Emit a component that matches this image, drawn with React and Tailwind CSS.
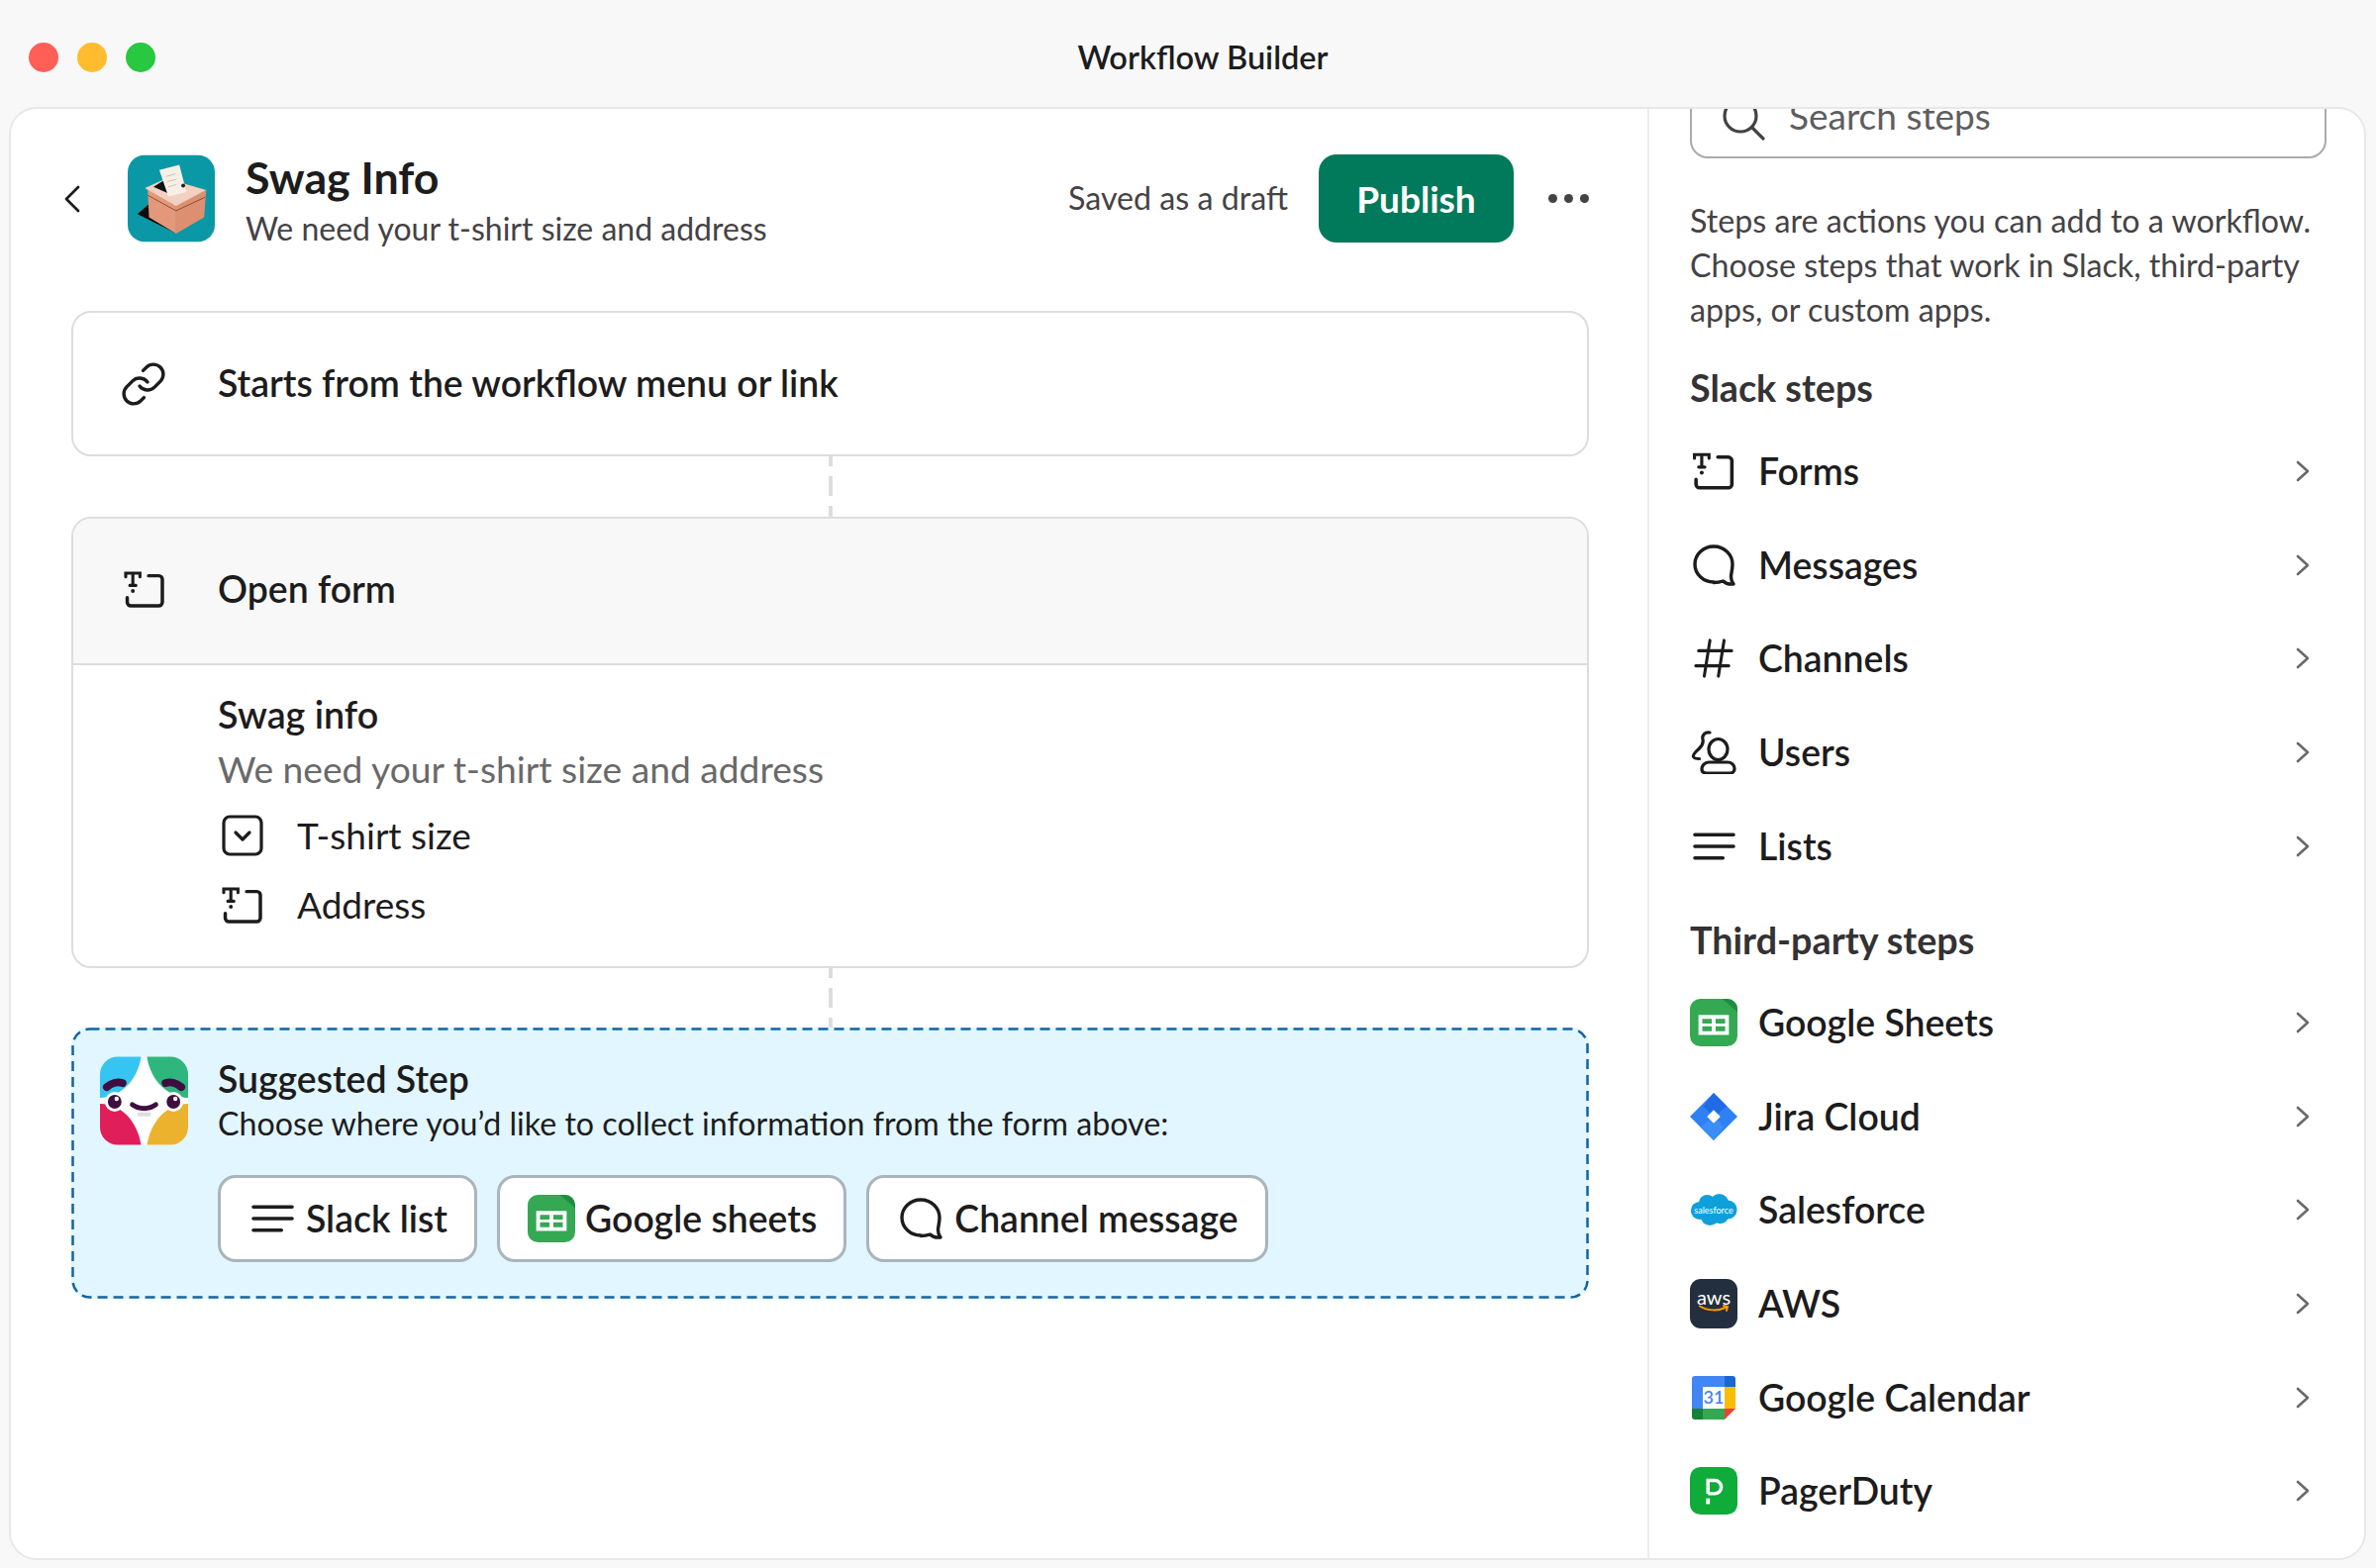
const FormIcon = ({ className }) => (
  <svg viewBox="0 0 40 36" fill="none" stroke="#1d1c1d" strokeWidth="3.400" strokeLinecap="round" className={className}>
    <path d="M24 4.500h10a3.500 3.500 0 0 1 3.500 3.500v22.500a3.500 3.500 0 0 1-3.500 3.500H6.500a3.500 3.500 0 0 1-3.500-3.500V26" />
    <path d="M1.500 5.500V2h14v3.500M8.500 2v11.500M5.500 14h6" strokeWidth="3" />
    <circle cx="8.500" cy="19.500" r="1.900" fill="#1d1c1d" stroke="none" />
  </svg>
);

const ListIcon = ({ className }) => (
  <svg viewBox="0 0 44 30" fill="none" stroke="#1d1c1d" strokeWidth="3.600" strokeLinecap="round" className={className}>
    <path d="M2 3h40M2 15h40M2 27h29" />
  </svg>
);

const BubbleIcon = ({ className }) => (
  <svg viewBox="0 0 44 44" fill="none" stroke="#1d1c1d" strokeWidth="3.400" strokeLinejoin="round" className={className}>
    <path d="M22 39C11.500 39 3 31 3 21S11.500 3 22 3s19 8 19 18c0 5.500-1.500 9.500-1.500 12.500 0 3 1 5.500 2.500 7.500-4 .5-8-.5-10.500-3-2.800 1-6 1.500-9.500 1.500z" />
  </svg>
);

const HashIcon = ({ className }) => (
  <svg viewBox="0 0 42 42" fill="none" stroke="#1d1c1d" strokeWidth="3.200" strokeLinecap="round" className={className}>
    <path d="M5 13h35M2 29h35M17 2 11 40M32 2l-6 38" />
  </svg>
);

const UsersIcon = ({ className }) => (
  <svg viewBox="0 0 46 44" fill="none" stroke="#1d1c1d" strokeWidth="3.200" strokeLinecap="round" strokeLinejoin="round" className={className}>
    <ellipse cx="27.500" cy="19" rx="9.500" ry="10.500" />
    <path d="M18 32h19c4 0 7 3 7 6v1c0 2.500-2 4-4 4H16c-3 0-5-1.500-5-4 0-3.500 3-7 7-7z" />
    <path d="M19 2c-5-.5-8 2.500-7 7 .8 3.500-.5 6-3.500 9-3 3-7 6-6 8.500 .7 1.800 3 2 6 2" />
  </svg>
);

const DropdownIcon = ({ className }) => (
  <svg viewBox="0 0 42 42" fill="none" stroke="#1d1c1d" strokeWidth="3.200" strokeLinecap="round" strokeLinejoin="round" className={className}>
    <rect x="2" y="2" width="38" height="38" rx="6" />
    <path d="m14 18 7 7 7-7" />
  </svg>
);

const LinkIcon = ({ className }) => (
  <svg viewBox="0 0 24 24" fill="none" stroke="#1d1c1d" strokeWidth="1.700" strokeLinecap="round" strokeLinejoin="round" className={className}>
    <path d="M10 13a5 5 0 0 0 7.540.54l3-3a5 5 0 0 0-7.070-7.070l-1.720 1.710" />
    <path d="M14 11a5 5 0 0 0-7.540-.54l-3 3a5 5 0 0 0 7.070 7.070l1.710-1.710" />
  </svg>
);

const BallotLogo = ({ className }) => (
  <svg viewBox="0 0 270 268" className={className}>
    <rect width="270" height="268" rx="52" fill="#0b98a6" />
    <path d="M30 182 70 148 150 242z" fill="#0c0c0c" />
    <path d="M62 104 150 155v88L66 192z" fill="#e3987a" />
    <path d="M150 155 243 108l-6 84-87 51z" fill="#dd8f6f" />
    <path d="M53 102 120 72 243 108 150 157z" fill="#f3d0bf" />
    <path d="M62 124 150 172 240 130" fill="none" stroke="#8b4a35" strokeWidth="3" />
    <path d="M80 98 112 78l18 42z" fill="#111" />
    <path d="M98 46 160 30l22 84-56 14z" fill="#f6f0e6" />
    <path d="M118 66l30-8M122 82l30-8M126 98l24-7" stroke="#c9c2b4" strokeWidth="3" />
    <circle cx="172" cy="94" r="6" fill="#222" />
  </svg>
);

const MascotLogo = ({ className }) => (
  <svg viewBox="0 0 90 90" className={className}>
    <rect width="90" height="90" rx="20" fill="#fff" />
    <path d="M42 0H18A18 18 0 0 0 0 18v24c20-1 38-16 42-42z" fill="#36c5f0" />
    <path d="M48 0h24a18 18 0 0 1 18 18v24C70 41 52 26 48 0z" fill="#2eb67d" />
    <path d="M0 48c22 0 38 18 42 42H18A18 18 0 0 1 0 72z" fill="#e01e5a" />
    <path d="M90 48c-22 0-38 18-42 42h24a18 18 0 0 0 18-18z" fill="#ecb22e" />
    <path d="M7 31c4-4 11-6 16-4M83 31c-4-4-11-6-16-4" fill="none" stroke="#3f0e40" strokeWidth="8" strokeLinecap="round" />
    <circle cx="15" cy="46" r="10" fill="#fff" />
    <circle cx="75" cy="46" r="10" fill="#fff" />
    <circle cx="15" cy="46" r="7" fill="#3f0e40" />
    <circle cx="75" cy="46" r="7" fill="#3f0e40" />
    <circle cx="17" cy="43" r="2.200" fill="#fff" />
    <circle cx="77" cy="43" r="2.200" fill="#fff" />
    <path d="M33 49c6 5 18 5 24 0" fill="none" stroke="#3f0e40" strokeWidth="5" strokeLinecap="round" />
    <path d="M40 59h10" stroke="#ddd" strokeWidth="4" strokeLinecap="round" />
  </svg>
);

const SheetsLogo = ({ className }) => (
  <svg viewBox="0 0 50 50" className={className}>
    <rect width="50" height="50" rx="11" fill="#34a853" />
    <path d="M34 0h5a11 11 0 0 1 11 11v3z" fill="#1e8e3e" />
    <path d="M9 17h32v21H9z" fill="#fff" />
    <path d="M13 21h10v5h-10zM27 21h10v5h-10zM13 29h10v5h-10zM27 29h10v5h-10z" fill="#34a853" />
  </svg>
);

const JiraLogo = ({ className }) => (
  <svg viewBox="0 0 50 50" className={className}>
    <path d="M25 0 50 25 25 50 0 25z" fill="#2f80f5" />
    <path d="M25 0 39 14 25 25 14 14z" fill="#1a62dd" opacity=".7" />
    <path d="M25 50 36 36 25 25 11 36z" fill="#3b8df7" />
    <path d="M25 18 32 25 25 32 18 25z" fill="#fff" />
  </svg>
);

const SalesforceLogo = ({ className }) => (
  <div className={`relative ${className}`}>
    <svg viewBox="0 0 50 36" className="w-full h-full">
      <g fill="#0ea0db">
        <circle cx="18" cy="11" r="9" />
        <circle cx="31" cy="11" r="10" />
        <circle cx="40" cy="18" r="10" />
        <circle cx="10" cy="19" r="9.500" />
        <circle cx="21" cy="25" r="10" />
        <circle cx="32" cy="24" r="9" />
      </g>
    </svg>
    <span className="absolute inset-0 flex items-center justify-center text-[9px] text-white leading-none">salesforce</span>
  </div>
);

const AwsLogo = ({ className }) => (
  <div className={`bg-[#232f3e] rounded-[11px] flex flex-col items-center justify-center ${className}`}>
    <span className="text-[20px] leading-[16px] text-white -mt-[5px]">aws</span>
    <svg viewBox="0 0 32 9" className="w-[32px] h-[9px]">
      <path d="M2 1.500c8 5 19 5 27 1M26 1l4 1-1 4" fill="none" stroke="#f90" strokeWidth="2" strokeLinecap="round" />
    </svg>
  </div>
);

const CalendarLogo = ({ className }) => (
  <div className={`relative ${className}`}>
    <svg viewBox="0 0 44 44" className="w-full h-full">
      <path d="M3 0h33v11H11v22H0V3a3 3 0 0 1 3-3z" fill="#4285f4" />
      <path d="M33 0h8a3 3 0 0 1 3 3v8H33z" fill="#1967d2" />
      <path d="M33 11h11v22H33z" fill="#fbbc04" />
      <path d="M11 33h22v11H11z" fill="#34a853" />
      <path d="M0 33h11v11H3a3 3 0 0 1-3-3z" fill="#188038" />
      <path d="M33 33h11L33 44z" fill="#ea4335" />
    </svg>
    <span className="absolute inset-0 flex items-center justify-center text-[18px] leading-none text-[#4285f4] font-semibold -mt-[1px]">31</span>
  </div>
);

const PagerLogo = ({ className }) => (
  <svg viewBox="0 0 50 50" className={className}>
    <rect width="50" height="50" rx="11" fill="#0fac3a" />
    <path d="M19 28V14h7a7 7 0 0 1 0 14h-7" fill="none" stroke="#fff" strokeWidth="3.600" />
    <path d="M19 33v6" stroke="#fff" strokeWidth="4" />
  </svg>
);

const slackSteps = [
  { name: "Forms", icon: <FormIcon className="w-[42px] h-[38px]" /> },
  { name: "Messages", icon: <BubbleIcon className="w-[44px] h-[44px]" /> },
  { name: "Channels", icon: <HashIcon className="w-[40px] h-[40px]" /> },
  { name: "Users", icon: <UsersIcon className="w-[46px] h-[44px]" /> },
  { name: "Lists", icon: <ListIcon className="w-[43px] h-[30px]" /> },
];

const thirdPartySteps = [
  { name: "Google Sheets", icon: <SheetsLogo className="w-[50px] h-[50px]" /> },
  { name: "Jira Cloud", icon: <JiraLogo className="w-[48px] h-[50px]" /> },
  { name: "Salesforce", icon: <SalesforceLogo className="w-[48px] h-[34px]" /> },
  { name: "AWS", icon: <AwsLogo className="w-[50px] h-[50px]" /> },
  { name: "Google Calendar", icon: <CalendarLogo className="w-[44px] h-[44px]" /> },
  { name: "PagerDuty", icon: <PagerLogo className="w-[50px] h-[50px]" /> },
];

const StepRow = ({ name, icon }) => (
  <div className="h-[94.6px] flex items-center">
    <div className="w-[48px] flex justify-center">{icon}</div>
    <span className="ml-[21px] text-[37.4px] font-semibold text-[#1d1c1d]">{name}</span>
    <svg viewBox="0 0 14 22" fill="none" stroke="#696969" strokeWidth="2.600" strokeLinecap="round" strokeLinejoin="round" className="ml-auto mr-[17px] w-[14px] h-[22px]">
      <path d="m2 2 10 9-10 9" />
    </svg>
  </div>
);

const Connector = ({ className }) => (
  <div className={`ml-[765px] w-[4px] bg-[linear-gradient(#dddddd_66%,transparent_66%)] bg-[length:100%_30px] bg-[position:0_-10px] ${className}`} />
);

const SuggestButton = ({ icon, label }) => (
  <button className="h-[88px] pl-[18px] pr-[27px] flex items-center bg-white border-[3px] border-[#a9b4bb] rounded-[18px] text-[37.4px] font-semibold text-[#1d1c1d]">
    <span className="w-[68px] flex justify-center">{icon}</span>
    {label}
  </button>
);

const App = () => {
  return (
    <div className="w-[2400px] h-[1584px] flex flex-col bg-[#f8f8f8] overflow-hidden [font-family:Lato,sans-serif]">
      {/* title bar */}
      <div className="relative h-[108px] shrink-0 flex items-center pt-[8px] pl-[29px] gap-[19px]">
        <div className="w-[30px] h-[30px] rounded-full bg-[#ff5f57]" />
        <div className="w-[30px] h-[30px] rounded-full bg-[#febc2e]" />
        <div className="w-[30px] h-[30px] rounded-full bg-[#28c840]" />
        <div className="absolute inset-x-0 pl-[30px] text-center text-[32.5px] font-semibold text-[#1d1c1d]">Workflow Builder</div>
      </div>

      <div className="ml-[9px] mr-[10px] h-[1468px] flex bg-white border-2 border-[#e8e8e8] rounded-[28px] overflow-hidden">
        {/* left column */}
        <div className="w-[1655px] shrink-0 pl-[61px] pr-[59px] pt-[46px] border-r-2 border-[#ececec]">
          <div className="h-[89px] flex items-center">
            <svg viewBox="0 0 18 28" fill="none" stroke="#1d1c1d" strokeWidth="2.800" strokeLinecap="round" strokeLinejoin="round" className="-ml-[8px] w-[18px] h-[28px]">
              <path d="M15 2 3 14l12 12" />
            </svg>
            <BallotLogo className="ml-[47px] w-[88px] h-[89px]" />
            <div className="ml-[31px] self-start">
              <div className="text-[44.7px] leading-[46px] font-bold text-[#1d1c1d]">Swag Info</div>
              <div className="mt-[8px] text-[32px] leading-[42px] text-[#454245]">We need your t-shirt size and address</div>
            </div>
            <span className="ml-auto text-[32.2px] text-[#454245]">Saved as a draft</span>
            <button className="ml-[31px] w-[197px] h-[89px] rounded-[18px] bg-[#007a5a] text-white text-[37px] font-bold">Publish</button>
            <div className="ml-[35px] flex gap-[7px]">
              <div className="w-[9px] h-[9px] rounded-full bg-[#454245]" />
              <div className="w-[9px] h-[9px] rounded-full bg-[#454245]" />
              <div className="w-[9px] h-[9px] rounded-full bg-[#454245]" />
            </div>
          </div>

          <div className="mt-[69px] h-[147px] flex items-center pl-[47px] gap-[51px] border-2 border-[#dddddd] rounded-[20px]">
            <LinkIcon className="w-[48px] h-[48px]" />
            <span className="text-[37.4px] font-semibold text-[#1d1c1d]">Starts from the workflow menu or link</span>
          </div>

          <Connector className="h-[61px]" />

          <div className="h-[456px] border-2 border-[#dddddd] rounded-[20px] overflow-hidden">
            <div className="h-[148px] flex items-center pl-[51px] pb-[3px] gap-[53px] bg-[#f8f8f8] border-b-2 border-[#dddddd]">
              <FormIcon className="w-[42px] h-[37px]" />
              <span className="text-[37.4px] font-semibold text-[#1d1c1d]">Open form</span>
            </div>
            <div className="pl-[146px] pt-[27px]">
              <div className="text-[37.7px] leading-[46px] font-semibold text-[#1d1c1d]">Swag info</div>
              <div className="mt-[9px] text-[37.2px] leading-[46px] text-[#696969]">We need your t-shirt size and address</div>
              <div className="mt-[22px] h-[44px] flex items-center gap-[34px] pl-[4px] text-[37px] text-[#1d1c1d]">
                <DropdownIcon className="w-[42px] h-[42px]" />
                T-shirt size
              </div>
              <div className="mt-[26px] h-[44px] flex items-center gap-[34px] pl-[4px] text-[37px] text-[#1d1c1d]">
                <FormIcon className="w-[42px] h-[37px]" />
                Address
              </div>
            </div>
          </div>

          <Connector className="h-[60px]" />

          <div className="relative h-[274px] pl-[29px] pt-[29px] flex gap-[30px] bg-[#e1f6ff] rounded-[18px]">
            <svg className="absolute inset-0 w-full h-full" fill="none">
              <rect x="1.500" y="1.500" width="1530" height="271" rx="17" stroke="#1264a3" strokeWidth="2.500" strokeDasharray="10 6" />
            </svg>
            <MascotLogo className="w-[89px] h-[90px] shrink-0" />
            <div>
              <div className="text-[37.4px] leading-[45px] font-semibold text-[#1d1c1d]">Suggested Step</div>
              <div className="text-[32.2px] leading-[45px] text-[#1d1c1d]">Choose where you’d like to collect information from the form above:</div>
              <div className="mt-[30px] flex gap-[20px]">
                <SuggestButton icon={<ListIcon className="w-[43px] h-[30px]" />} label="Slack list" />
                <SuggestButton icon={<SheetsLogo className="w-[48px] h-[50px]" />} label="Google sheets" />
                <SuggestButton icon={<BubbleIcon className="w-[44px] h-[44px]" />} label="Channel message" />
              </div>
            </div>
          </div>
        </div>

        {/* steps sidebar */}
        <div className="flex-1 pl-[41px] pr-[38px] overflow-hidden">
          <div className="-mt-[42px] h-[92px] flex items-end pb-[18px] pl-[30px] gap-[24px] border-2 border-[#aaaaaa] rounded-[18px]">
            <svg viewBox="0 0 44 44" fill="none" stroke="#454245" strokeWidth="3.200" strokeLinecap="round" className="w-[44px] h-[44px] shrink-0 -mb-[2px]">
              <circle cx="19" cy="19" r="16" />
              <path d="m31 31 11 11" />
            </svg>
            <span className="text-[37px] leading-[46px] text-[#5e5d60]">Search steps</span>
          </div>

          <p className="mt-[40px] text-[32.2px] leading-[45px] text-[#454245]">
            Steps are actions you can add to a workflow. Choose steps that work in Slack, third-party apps, or custom apps.
          </p>

          <div className="mt-[34px] mb-[14px] text-[37.7px] leading-[46px] font-bold text-[#343234]">Slack steps</div>
          {slackSteps.map((step) => (
            <StepRow key={step.name} {...step} />
          ))}

          <div className="mt-[25px] mb-[13px] text-[37.7px] leading-[46px] font-bold text-[#343234]">Third-party steps</div>
          {thirdPartySteps.map((step) => (
            <StepRow key={step.name} {...step} />
          ))}
        </div>
      </div>
    </div>
  );
};

export default App;
